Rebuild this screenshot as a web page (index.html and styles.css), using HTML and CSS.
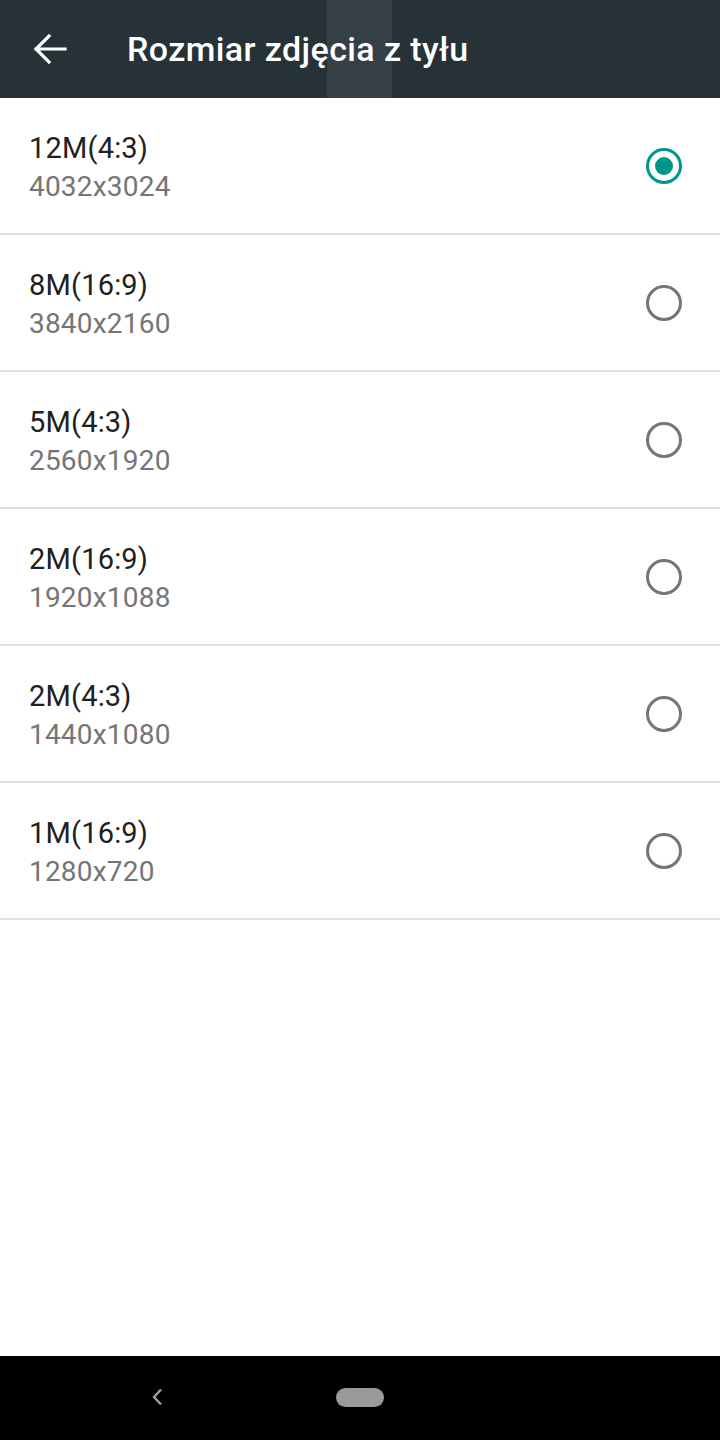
FILE: index.html
```html
<!DOCTYPE html>
<html lang="pl">
<head>
<meta charset="utf-8">
<title>Rozmiar zdjęcia z tyłu</title>
<link rel="stylesheet" href="styles.css">
</head>
<body>
<div class="screen">
  <header class="appbar">
    <div class="band"></div>
    <button class="back" aria-label="Wstecz">
      <svg width="34" height="32" viewBox="0 0 34 32"><path d="M32 16H3M16 3L3 16l13 13" fill="none" stroke="#fff" stroke-width="3.2" stroke-linecap="square"/></svg>
    </button>
    <h1 class="title">Rozmiar zdjęcia z tyłu</h1>
  </header>
  <main class="list">
    <div class="row">
      <div class="texts"><div class="primary">12M(4:3)</div><div class="secondary">4032x3024</div></div>
      <span class="radio checked"></span>
    </div>
    <div class="row">
      <div class="texts"><div class="primary">8M(16:9)</div><div class="secondary">3840x2160</div></div>
      <span class="radio"></span>
    </div>
    <div class="row">
      <div class="texts"><div class="primary">5M(4:3)</div><div class="secondary">2560x1920</div></div>
      <span class="radio"></span>
    </div>
    <div class="row">
      <div class="texts"><div class="primary">2M(16:9)</div><div class="secondary">1920x1088</div></div>
      <span class="radio"></span>
    </div>
    <div class="row">
      <div class="texts"><div class="primary">2M(4:3)</div><div class="secondary">1440x1080</div></div>
      <span class="radio"></span>
    </div>
    <div class="row">
      <div class="texts"><div class="primary">1M(16:9)</div><div class="secondary">1280x720</div></div>
      <span class="radio"></span>
    </div>
  </main>
  <nav class="navbar">
    <svg class="nav-back" width="12" height="18" viewBox="0 0 12 18"><path d="M10 1.5L3 9l7 7.5" fill="none" stroke="#a0a0a0" stroke-width="2.4"/></svg>
    <span class="pill"></span>
  </nav>
</div>
</body>
</html>
```

FILE: styles.css
```css
* { box-sizing: border-box; }
html, body { margin: 0; padding: 0; }
body {
  width: 720px;
  height: 1440px;
  background: #fff;
  font-family: Roboto, "Noto Sans", sans-serif;
  overflow: hidden;
}
.screen {
  width: 720px;
  height: 1440px;
  display: flex;
  flex-direction: column;
}
.appbar {
  position: relative;
  height: 98px;
  background: #263238;
  display: flex;
  align-items: center;
  flex-shrink: 0;
}
.band {
  position: absolute;
  left: 327px;
  top: 0;
  width: 65px;
  height: 98px;
  background: rgba(255,255,255,0.07);
}
.back {
  position: relative;
  width: 34px;
  height: 32px;
  margin-left: 33px;
  padding: 0;
  border: 0;
  background: none;
  display: flex;
}
.title {
  position: relative;
  margin: 0 0 0 60px;
  color: #fff;
  font-size: 34px;
  font-weight: 500;
  letter-spacing: 0.4px;
}
.list { flex: 1; }
.row {
  height: 137px;
  border-bottom: 2px solid #e0e0e0;
  display: flex;
  align-items: center;
  justify-content: space-between;
  padding: 3px 38px 0 29px;
}
.texts { display: flex; flex-direction: column; }
.primary {
  font-size: 29px;
  line-height: 40px;
  color: #212121;
  letter-spacing: 0.2px;
}
.secondary {
  font-size: 28px;
  line-height: 38px;
  color: #757575;
  letter-spacing: 0.2px;
}
.radio {
  width: 36px;
  height: 36px;
  margin-bottom: 3px;
  border-radius: 50%;
  border: 3.5px solid #757575;
  display: flex;
  align-items: center;
  justify-content: center;
}
.radio.checked { border-color: #009688; }
.radio.checked::after {
  content: "";
  width: 18px;
  height: 18px;
  border-radius: 50%;
  background: #009688;
}
.navbar {
  height: 84px;
  background: #000;
  flex-shrink: 0;
  display: flex;
  align-items: center;
  padding-left: 151px;
  padding-bottom: 2px;
}
.nav-back { display: block; }
.pill {
  width: 48px;
  height: 19px;
  border-radius: 10px;
  background: #9a9a9a;
  margin-left: 173px;
}
```
